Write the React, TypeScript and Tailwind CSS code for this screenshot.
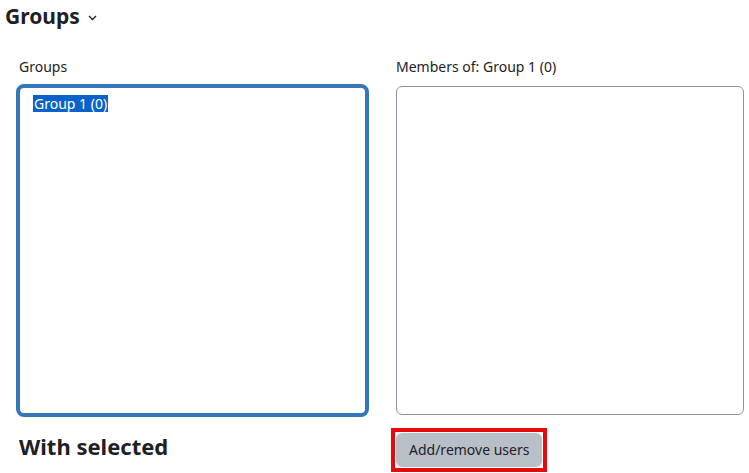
import React from 'react';

const App: React.FC = () => {
  return (
    <div className="w-[749px] h-[473px] overflow-hidden bg-white text-[#1d2125] font-['Noto_Sans',sans-serif]">
      <div className="flex items-center gap-2 pl-[5px] pt-[2px] h-[30px]">
        <h2 className="text-[21px] font-bold leading-none">Groups</h2>
        <svg width="9" height="6" viewBox="0 0 9 6" className="mt-[4px]">
          <path d="M1 1l3.5 3.5L8 1" fill="none" stroke="#1d2125" strokeWidth="1.3" />
        </svg>
      </div>

      <div className="grid grid-cols-[353px_348px] gap-x-[27px] pl-[16px] pt-[27px]">
        <div className="flex flex-col">
          <label className="text-[14px] leading-[20px] pl-[3px] mb-[7px]">Groups</label>
          <div className="h-[333px] border-[4px] border-[#3576b8] rounded-[8px] pl-[13px] pt-[7px]">
            <span className="block w-fit bg-[#0a63c9] text-white text-[14px] leading-[17px] px-[1px]">Group 1 (0)</span>
          </div>
        </div>
        <div className="flex flex-col">
          <label className="text-[14px] leading-[20px] mb-[9px]">Members of: Group 1 (0)</label>
          <div className="h-[329px] border border-[#8f959e] rounded-[6px]" />
        </div>

        <div className="pt-[15px] pl-[3px]">
          <h3 className="text-[22px] font-bold leading-[28px]">With selected</h3>
        </div>
        <div className="pt-[11px] -ml-[5px]">
          <div className="inline-block border-[4px] border-[#e60a0a] p-[1px]">
            <button className="bg-[#b8bfc7] text-[#1d2125] text-[14px] leading-[20px] px-[13px] py-[7px] rounded-[6px]">
              Add/remove users
            </button>
          </div>
        </div>
      </div>
    </div>
  );
};

export default App;
